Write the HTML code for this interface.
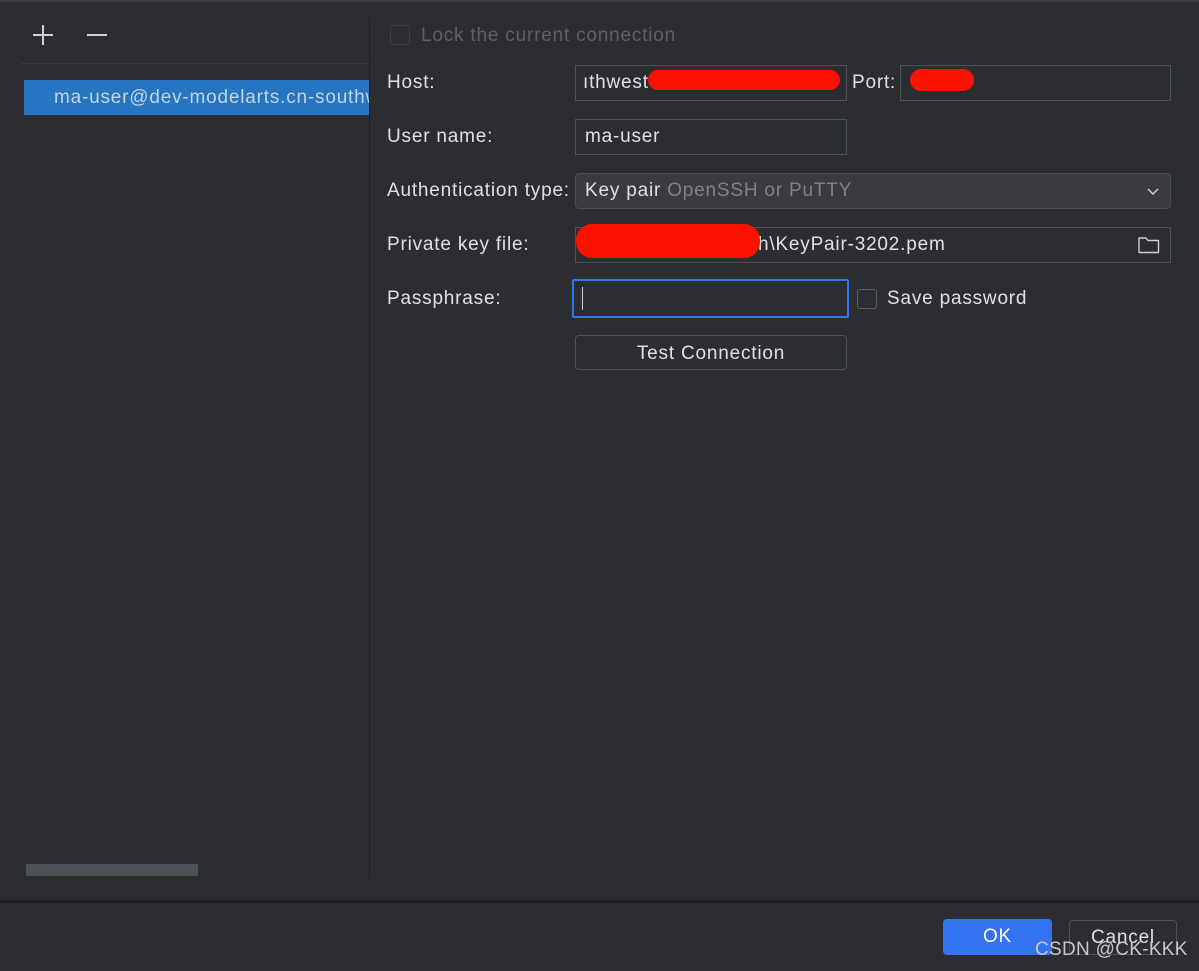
<!DOCTYPE html>
<html><head><meta charset="utf-8"><style>
*{box-sizing:border-box;margin:0;padding:0}
body{width:1199px;height:971px;background:#2b2d30;font-family:"Liberation Sans",sans-serif;color:#dfe1e5;font-size:19px;letter-spacing:0.8px;position:relative;overflow:hidden}
.a{position:absolute}
.f{position:absolute;border:1px solid #4e5157;background:#2b2d30;height:36px;line-height:34px;padding-left:9px;white-space:nowrap;overflow:hidden}
.lbl{position:absolute;left:387px;line-height:20px;top:0}
.red{position:absolute;background:#ff1100;border-radius:14px}
</style></head><body>
<div class="a" style="left:0;top:0;width:1199px;height:2px;background:#3c3f41"></div>
<div class="a" style="left:33px;top:34px;width:20px;height:2px;background:#ced0d6"></div>
<div class="a" style="left:42px;top:25px;width:2px;height:20px;background:#ced0d6"></div>
<div class="a" style="left:87px;top:34px;width:20px;height:2px;background:#ced0d6"></div>
<div class="a" style="left:21px;top:63px;width:348px;height:1px;background:#393b40"></div>
<div class="a" style="left:24px;top:80px;width:345px;height:35px;background:#2675c0;color:#c5d3e3;line-height:35px;padding-left:30px;white-space:nowrap;overflow:hidden">ma-user@dev-modelarts.cn-southwest</div>
<div class="a" style="left:369px;top:18px;width:1px;height:860px;background:#1e1f22"></div>
<div class="a" style="left:26px;top:864px;width:172px;height:12px;background:#4e5157"></div>
<div class="a" style="left:0;top:900px;width:1199px;height:3px;background:#1e1f22"></div>

<div class="a" style="left:390px;top:25px;width:20px;height:20px;border:1px solid #3c3f43;border-radius:3px"></div>
<div class="a" style="left:421px;top:25px;color:#5f6166;line-height:22px">Lock the current connection</div>

<div class="lbl" style="top:73px">Host:</div>
<div class="f" style="left:575px;top:65px;width:272px;padding-left:7px">ıthwest</div>
<div class="red" style="left:648px;top:70px;width:192px;height:20px"></div>
<div class="a" style="left:852px;top:73px;line-height:20px">Port:</div>
<div class="f" style="left:900px;top:65px;width:271px"></div>
<div class="red" style="left:910px;top:69px;width:64px;height:22px;border-radius:11px"></div>

<div class="lbl" style="top:127px">User name:</div>
<div class="f" style="left:575px;top:119px;width:272px">ma-user</div>

<div class="lbl" style="top:181px">Authentication type:</div>
<div class="f" style="left:575px;top:173px;width:596px;background:#393b40;border-color:#4a4d52;border-radius:4px">Key pair <span style="color:#7f8287">OpenSSH or PuTTY</span></div>
<svg class="a" style="left:1146px;top:185px" width="14" height="12"><path d="M2 4l5 5 5-5" fill="none" stroke="#ced0d6" stroke-width="1.5"/></svg>

<div class="lbl" style="top:235px">Private key file:</div>
<div class="f" style="left:575px;top:227px;width:596px;padding-left:0"><span style="margin-left:182px">h\KeyPair-3202.pem</span></div>
<div class="red" style="left:576px;top:224px;width:184px;height:34px;border-radius:16px"></div>
<svg class="a" style="left:1137px;top:235px" width="24" height="20"><path d="M2 3h7l2 2.5h10.5v12H2z" fill="none" stroke="#ced0d6" stroke-width="1.4" stroke-linejoin="round"/></svg>

<div class="lbl" style="top:289px">Passphrase:</div>
<div class="a" style="left:572px;top:279px;width:277px;height:39px;border:2px solid #3574f0;border-radius:2px"></div>
<div class="a" style="left:582px;top:287px;width:1px;height:23px;background:#ced0d6"></div>
<div class="a" style="left:857px;top:289px;width:20px;height:20px;border:1px solid #5a5d63;border-radius:3px"></div>
<div class="a" style="left:887px;top:289px;line-height:20px">Save password</div>

<div class="a" style="left:575px;top:335px;width:272px;height:35px;border:1px solid #4e5157;border-radius:4px;text-align:center;line-height:35px">Test Connection</div>

<div class="a" style="left:943px;top:919px;width:109px;height:36px;background:#3574f0;border-radius:4px;color:#fff;text-align:center;line-height:36px">OK</div>
<div class="a" style="left:1069px;top:920px;width:108px;height:35px;border:1px solid #4e5157;border-radius:4px;text-align:center;line-height:33px">Cancel</div>
<div class="a" style="left:1035px;top:939px;color:#c8c8c8;font-size:19px;letter-spacing:0.3px;line-height:22px">CSDN @CK-KKK</div>
</body></html>
